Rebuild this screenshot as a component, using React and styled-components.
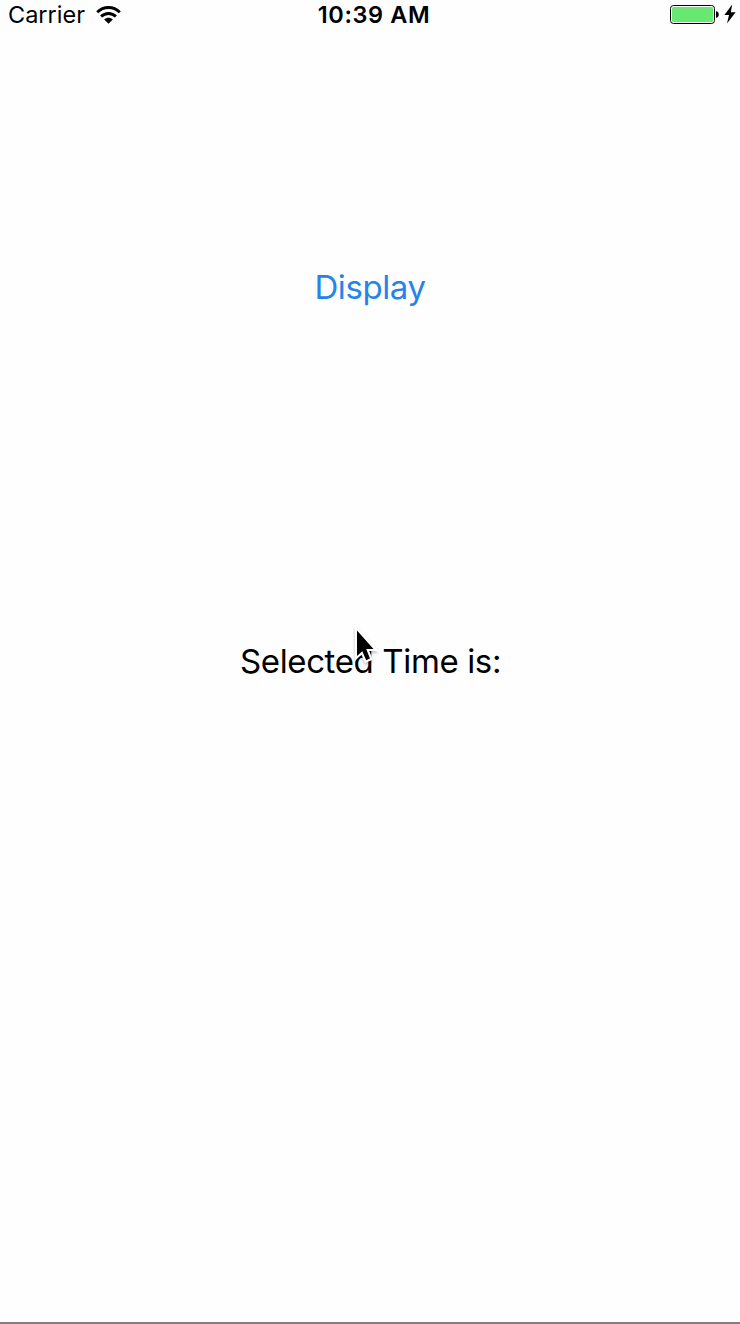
import React from "react";
import styled, { createGlobalStyle } from "styled-components";

const GlobalStyle = createGlobalStyle`
  *, *::before, *::after { box-sizing: border-box; }
  body { margin: 0; background: #fefefe; font-family: Inter, "Liberation Sans", sans-serif; }
`;

const Screen = styled.main`
  position: relative;
  display: flex;
  flex-direction: column;
  align-items: center;
  height: 1324px;
  background: #fefefe;
  border-bottom: 2px solid #808080;
  overflow: hidden;
`;

const StatusBar = styled.header`
  display: grid;
  grid-template-columns: 1fr auto 1fr;
  align-items: center;
  width: 100%;
  height: 30px;
  padding: 0 4px 0 8px;
  color: #000;
  font-size: 23.5px;
  line-height: 30px;
`;

const CarrierGroup = styled.div`
  display: flex;
  align-items: center;
  gap: 11px;
`;

const Carrier = styled.span`
  letter-spacing: 0;
`;

const Clock = styled.time`
  font-size: 23.5px;
  font-weight: 600;
  letter-spacing: 0.6px;
  margin-left: 4px;
`;

const BatteryGroup = styled.div`
  display: flex;
  align-items: center;
  justify-content: flex-end;
  gap: 5px;
  padding-bottom: 2px;
`;

const DisplayButton = styled.button`
  margin: 233px 0 0;
  padding: 0;
  border: 0;
  background: none;
  color: #2683ea;
  font-family: inherit;
  font-size: 33px;
  letter-spacing: -0.4px;
  line-height: 49px;
`;

const TimeLabel = styled.p`
  margin: 325px 0 0;
  padding-left: 1px;
  color: #000;
  font-size: 33px;
  letter-spacing: -0.37px;
  line-height: 49px;
  white-space: nowrap;
`;

const Pointer = styled.svg`
  position: absolute;
  left: 348px;
  top: 622px;
  filter: drop-shadow(0 2px 1.5px rgba(0, 0, 0, 0.25));
`;

function WifiIcon() {
  return (
    <svg width="25" height="18" viewBox="0 0 25 18" fill="none" stroke="#000" strokeWidth="3">
      <path d="M1.2 6.3C7.6 0 17.4 0 23.8 6.3" />
      <path d="M5.1 10.5C9.3 6.4 15.7 6.4 19.9 10.5" />
      <path d="M8.2 13.5C10.6 11.1 14.4 11.1 16.8 13.5L12.5 17.8Z" fill="#000" stroke="none" />
    </svg>
  );
}

function BatteryIcon() {
  return (
    <svg width="49" height="19" viewBox="0 0 49 19">
      <rect x="0.5" y="0.5" width="44" height="18" rx="3" fill="#fff" stroke="#000" />
      <rect x="2" y="2" width="41" height="15" rx="1.5" fill="#66e871" />
      <path d="M46 6.2C49.7 6.2 49.7 12.8 46 12.8Z" fill="#000" />
    </svg>
  );
}

function BoltIcon() {
  return (
    <svg width="12" height="20" viewBox="0 0 12 20">
      <path d="M8.2 0.5L0.4 11H5L3 19.5L11.6 8.2H6.8Z" fill="#000" />
    </svg>
  );
}

export default function App() {
  return (
    <>
      <GlobalStyle />
      <Screen>
        <StatusBar>
          <CarrierGroup>
            <Carrier>Carrier</Carrier>
            <WifiIcon />
          </CarrierGroup>
          <Clock>10:39 AM</Clock>
          <BatteryGroup>
            <BatteryIcon />
            <BoltIcon />
          </BatteryGroup>
        </StatusBar>
        <DisplayButton type="button">Display</DisplayButton>
        <TimeLabel>Selected Time is:</TimeLabel>
        <Pointer width="36" height="50" viewBox="0 0 36 50">
          <path
            d="M9 8.5V34L14.3 29.3L18.2 38.2L22 36.6L18.2 27H25.5Z"
            fill="#000"
            stroke="#fff"
            strokeWidth="4.2"
            style={{ paintOrder: "stroke" }}
          />
        </Pointer>
      </Screen>
    </>
  );
}
